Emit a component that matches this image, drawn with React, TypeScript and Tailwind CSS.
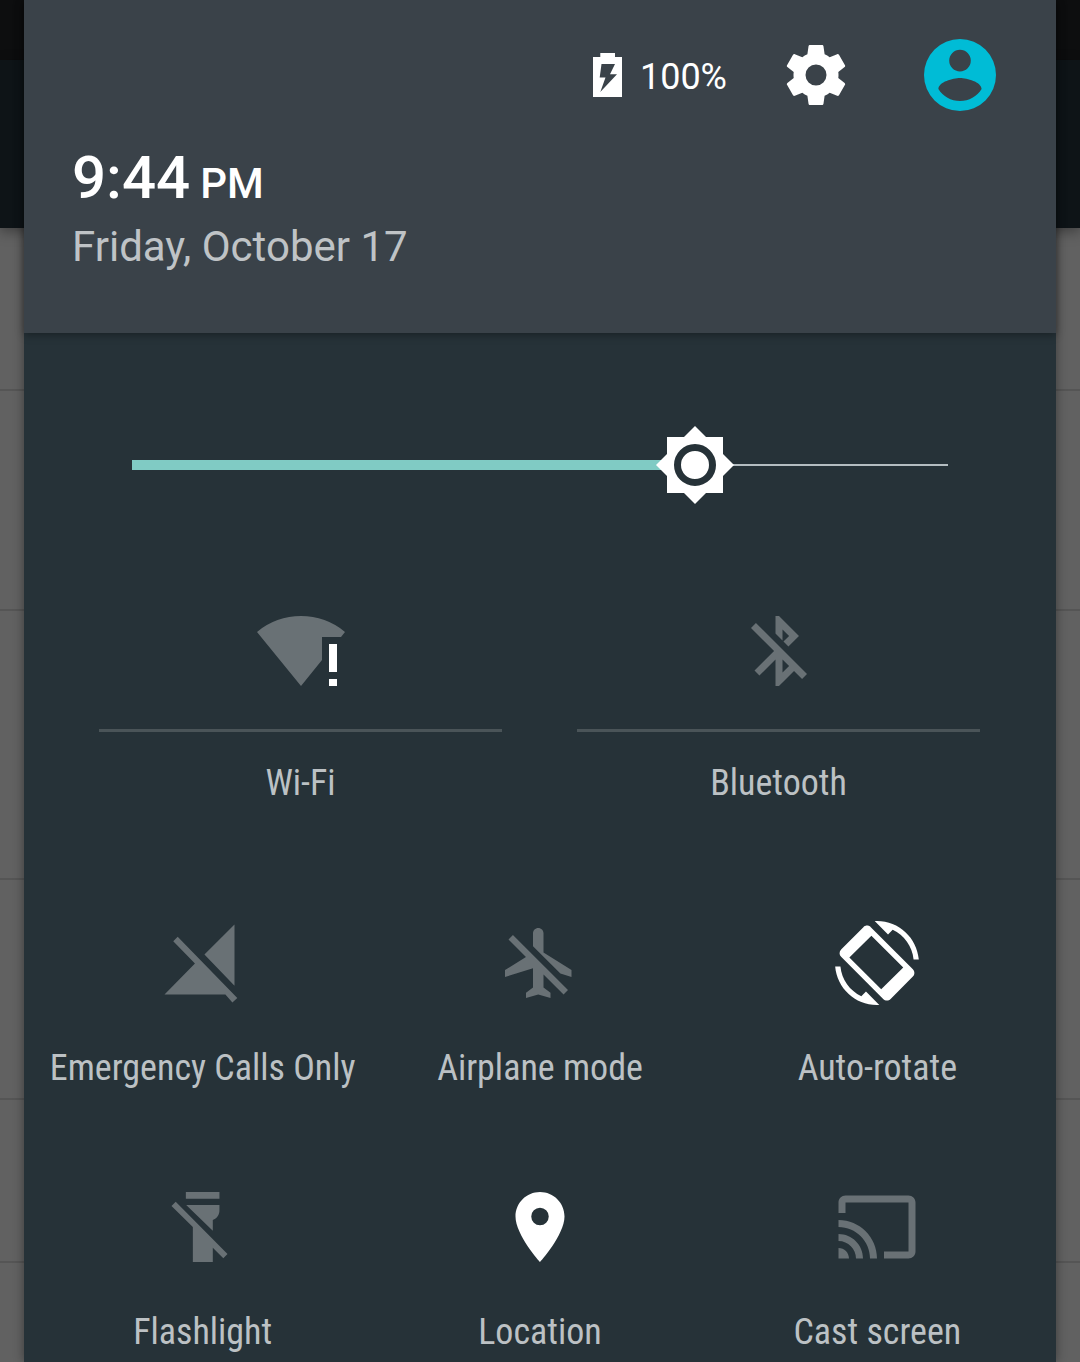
import { useState } from "react"
import type { ReactNode } from "react"

interface TileProps {
  label: string
  active?: boolean
  divided?: boolean
  children: ReactNode
}

const ICONS = {
  settings:
    "M19.43 12.98c.04-.32.07-.64.07-.98s-.03-.66-.07-.98l2.11-1.65c.19-.15.24-.42.12-.64l-2-3.46c-.12-.22-.39-.3-.61-.22l-2.49 1c-.52-.4-1.08-.73-1.69-.98l-.38-2.65C14.46 2.18 14.25 2 14 2h-4c-.25 0-.46.18-.49.42l-.38 2.65c-.61.25-1.17.59-1.69.98l-2.49-1c-.23-.09-.49 0-.61.22l-2 3.46c-.13.22-.07.49.12.64l2.11 1.65c-.04.32-.07.65-.07.98s.03.66.07.98l-2.11 1.65c-.19.15-.24.42-.12.64l2 3.46c.12.22.39.3.61.22l2.49-1c.52.4 1.08.73 1.69.98l.38 2.65c.03.24.24.42.49.42h4c.25 0 .46-.18.49-.42l.38-2.65c.61-.25 1.17-.59 1.69-.98l2.49 1c.23.09.49 0 .61-.22l2-3.46c.12-.22.07-.49-.12-.64l-2.11-1.65zM12 15.5a3.5 3.5 0 1 1 0-7 3.5 3.5 0 0 1 0 7z",
  bluetoothOff:
    "M13 5.83l1.88 1.88-1.6 1.6 1.41 1.41 3.02-3.02L12 2h-1v5.03l2 2v-3.2zM5.41 4L4 5.41 10.59 12 5 17.59 6.41 19 11 14.41V22h1l4.29-4.29 2.3 2.29L20 18.59 5.41 4zM13 18.17v-3.76l1.88 1.88L13 18.17z",
  signalOff:
    "M21 1l-8.59 8.59L21 18.5V1zM4.77 4.5L3.5 5.77l6.2 6.36L1 21h17.4l2 2.3 1.4-1.27L4.77 4.5z",
  airplaneOff:
    "M13 9V3.5c0-.83-.67-1.5-1.5-1.5S10 2.67 10 3.5v3.68l7.83 7.83L21 16v-2l-8-5zM3 5.27l4.99 4.99L2 14v2l8-2.5V19l-2 1.5V22l3.5-1 3.5 1v-1.5L13 19v-3.73L18.73 21 20 19.73 4.27 4 3 5.27z",
  rotate:
    "M16.48 2.52c3.27 1.55 5.61 4.72 5.97 8.48h1.5C23.44 4.84 18.29 0 12 0l-.66.03 3.81 3.81 1.33-1.32zm-6.25-.77c-.59-.59-1.54-.59-2.12 0L1.75 8.11c-.59.59-.59 1.54 0 2.12l12.02 12.02c.59.59 1.54.59 2.12 0l6.36-6.36c.59-.59.59-1.54 0-2.12L10.23 1.75zM13.2 19.5L4.1 10.4l6.3-6.2 9.1 9.1-6.3 6.2zM7.52 21.48C4.25 19.94 1.91 16.76 1.55 13H.05C.56 19.16 5.71 24 12 24l.66-.03-3.81-3.81-1.33 1.32z",
  flashlightOff:
    "M7.1 2h9.6v1.9H7.1zM7.2 5.7h9.5v1.5c0 1.3-.7 2.3-1.9 2.8v3.1L7.2 5.7zM4.2 4.8L3 6l6.1 6V22h5.7v-4.1l3 3L19 19.7 4.2 4.8z",
  location:
    "M12 2C8.13 2 5 5.13 5 9c0 5.25 7 13 7 13s7-7.75 7-13c0-3.87-3.13-7-7-7zm0 9.5a2.5 2.5 0 0 1 0-5 2.5 2.5 0 0 1 0 5z",
  cast: "M21 3H3c-1.1 0-2 .9-2 2v3h2V5h18v14h-7v2h7c1.1 0 2-.9 2-2V5c0-1.1-.9-2-2-2zM1 18v3h3c0-1.66-1.34-3-3-3zm0-4v2c2.76 0 5 2.24 5 5h2c0-3.87-3.13-7-7-7zm0-4v2c4.97 0 9 4.03 9 9h2c0-6.08-4.93-11-11-11z",
}

function Icon({ d, className = "size-[84px]" }: { d: string; className?: string }) {
  return (
    <svg viewBox="0 0 24 24" fill="currentColor" fillRule="evenodd" aria-hidden="true" className={className}>
      <path d={d} />
    </svg>
  )
}

function WifiIcon() {
  return (
    <svg viewBox="0 -7 88 84" fill="currentColor" aria-hidden="true" className="h-[84px] w-[88px]">
      <path d="M0 16A68.5 68.5 0 0 1 88 16L84 21H65V44L44 70Z" />
      <path d="M72 28h8v28h-8zM72 63h8v7h-8z" fill="#fff" />
    </svg>
  )
}

function BatteryIcon() {
  return (
    <svg viewBox="0 0 29 44" fill="#fff" fillRule="evenodd" aria-hidden="true" className="h-[44px] w-[29px]">
      <path d="M7.3 0H22V4H29V44H0V4H7.3ZM8.5 11L6.7 24.5H12.5L7.3 39L24 21.3H17L22 11Z" />
    </svg>
  )
}

function AccountIcon() {
  return (
    <svg viewBox="0 0 72 72" fill="#00bcd6" fillRule="evenodd" aria-hidden="true" className="size-[72px]">
      <path d="M36 0a36 36 0 1 1 0 72a36 36 0 0 1 0-72zM36 10.8a10.8 10.8 0 1 0 0 21.6a10.8 10.8 0 0 0 0-21.6zM14.4 50C19 57.5 27 62 36 62S53 57.5 57.6 50C57.5 43 43 39 36 39S14.5 43 14.4 50z" />
    </svg>
  )
}

// Sun shaped slider handle
function BrightnessThumb() {
  return (
    <svg viewBox="0 0 78 78" fill="#fff" aria-hidden="true" className="size-[78px]">
      <path d="M11 11h56v56H11z" />
      <path d="M39 0L78 39L39 78L0 39z" />
      <circle cx="39" cy="39" r="17.5" stroke="#263238" strokeWidth="7" />
    </svg>
  )
}

function BrightnessSlider() {
  const [value, setValue] = useState(69)

  return (
    <div className="relative mx-[108px] flex h-[78px] items-center">
      <div className="h-[10px] bg-[#80cbc4]" style={{ width: `${value}%` }} />
      <div className="h-[2px] flex-1 bg-[#b4bdc1]" />
      <div className="absolute top-0 -translate-x-1/2" style={{ left: `${value}%` }}>
        <BrightnessThumb />
      </div>
      <input
        type="range"
        min={0}
        max={100}
        value={value}
        aria-label="Brightness"
        onChange={(e) => setValue(Number(e.target.value))}
        className="absolute inset-0 size-full cursor-pointer opacity-0"
      />
    </div>
  )
}

function Tile({ label, active = false, divided = false, children }: TileProps) {
  return (
    <button type="button" aria-pressed={active} className="flex min-w-0 flex-col items-center">
      <span className={active ? "text-white" : "text-[#697175]"}>{children}</span>
      {divided && <span className="mt-9 h-[3px] w-full bg-[#4a5458]" />}
      <span
        className={`${divided ? "mt-7" : "mt-10"} whitespace-nowrap font-['Roboto_Condensed','Liberation_Sans_Narrow',Roboto,sans-serif] text-[36px] leading-[46px] text-[#bcc1c4]`}
      >
        {label}
      </span>
    </button>
  )
}

// Dimmed app list that shows at both sides of the shade
function Backdrop() {
  return (
    <div className="absolute inset-0 flex flex-col overflow-hidden bg-[#616161]" aria-hidden="true">
      <div className="h-[60px] shrink-0 bg-[#0d0e0f]" />
      <div className="h-[168px] shrink-0 bg-[#0e1417] shadow-[0_4px_12px_rgba(0,0,0,0.35)]" />
      <div className="h-[163px] shrink-0 border-b-2 border-[#555555]" />
      <div className="h-[220px] shrink-0 border-b-2 border-[#555555]" />
      <div className="h-[269px] shrink-0 border-b-2 border-[#555555]" />
      <div className="h-[220px] shrink-0 border-b-2 border-[#555555]" />
      <div className="h-[163px] shrink-0 border-b-2 border-[#555555]" />
    </div>
  )
}

export default function App() {
  return (
    <div className="relative min-h-screen overflow-hidden font-[Roboto,sans-serif]">
      <Backdrop />
      <main className="relative mx-6 min-h-screen bg-[#263238] shadow-[0_0_10px_rgba(0,0,0,0.4)]">
        <header className="relative bg-[#3a4249] pt-[39px] pb-[58px] shadow-[0_2px_8px_rgba(0,0,0,0.35)]">
          <div className="flex items-center justify-end pr-[60px]">
            <BatteryIcon />
            <span className="ml-[18px] pt-1 text-[36px] leading-[48px] text-white">100%</span>
            <button type="button" aria-label="Settings" className="ml-[53px] text-white">
              <Icon d={ICONS.settings} className="size-[72px]" />
            </button>
            <button type="button" aria-label="User" className="ml-[72px]">
              <AccountIcon />
            </button>
          </div>
          <div className="mt-8 px-12">
            <p className="text-[60px] leading-[70px] font-medium text-white">
              9:44<span className="ml-[10px] text-[42px] leading-none">PM</span>
            </p>
            <p className="mt-[6px] text-[42px] leading-[56px] text-[#bfc3c6]">Friday, October 17</p>
          </div>
        </header>

        <div className="pt-[93px] pb-[7px]">
          <BrightnessSlider />

          <div className="mt-[105px] grid grid-cols-2 gap-x-[75px] pr-[76px] pl-[75px]">
            <Tile label="Wi-Fi" divided>
              <WifiIcon />
            </Tile>
            <Tile label="Bluetooth" divided>
              <Icon d={ICONS.bluetoothOff} />
            </Tile>
          </div>

          <div className="mt-[115px] grid grid-cols-3 gap-y-[94px] px-[10px]">
            <Tile label="Emergency Calls Only">
              <Icon d={ICONS.signalOff} />
            </Tile>
            <Tile label="Airplane mode">
              <Icon d={ICONS.airplaneOff} />
            </Tile>
            <Tile label="Auto-rotate" active>
              <Icon d={ICONS.rotate} />
            </Tile>
            <Tile label="Flashlight">
              <Icon d={ICONS.flashlightOff} />
            </Tile>
            <Tile label="Location" active>
              <Icon d={ICONS.location} />
            </Tile>
            <Tile label="Cast screen">
              <Icon d={ICONS.cast} />
            </Tile>
          </div>
        </div>
      </main>
    </div>
  )
}
